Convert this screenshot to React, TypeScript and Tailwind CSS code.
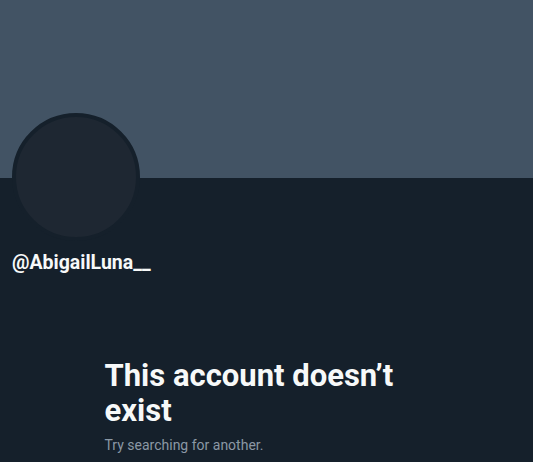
export default function App() {
  return (
    <div className="min-h-[462px] w-full bg-[#15202b] font-['Roboto','Liberation_Sans',sans-serif] overflow-hidden">
      <div className="h-[178px] bg-[#425364]" />
      <div className="px-3">
        <div className="-mt-[65px] h-[128px] w-[128px] rounded-full border-4 border-[#15202b] bg-[#1e2732]" />
        <div className="mt-[12px] text-[19.5px] font-bold leading-5 text-[#f7f9f9]">@AbigailLuna__</div>
      </div>
      <div className="mx-auto mt-[85px] w-[336px] pl-[6px]">
        <h2 className="text-[31px] font-bold leading-[35px] text-[#f7f9f9]">
          This account doesn’t exist
        </h2>
        <p className="mt-[7px] text-[14px] leading-5 text-[#8b98a5]">Try searching for another.</p>
      </div>
    </div>
  );
}
